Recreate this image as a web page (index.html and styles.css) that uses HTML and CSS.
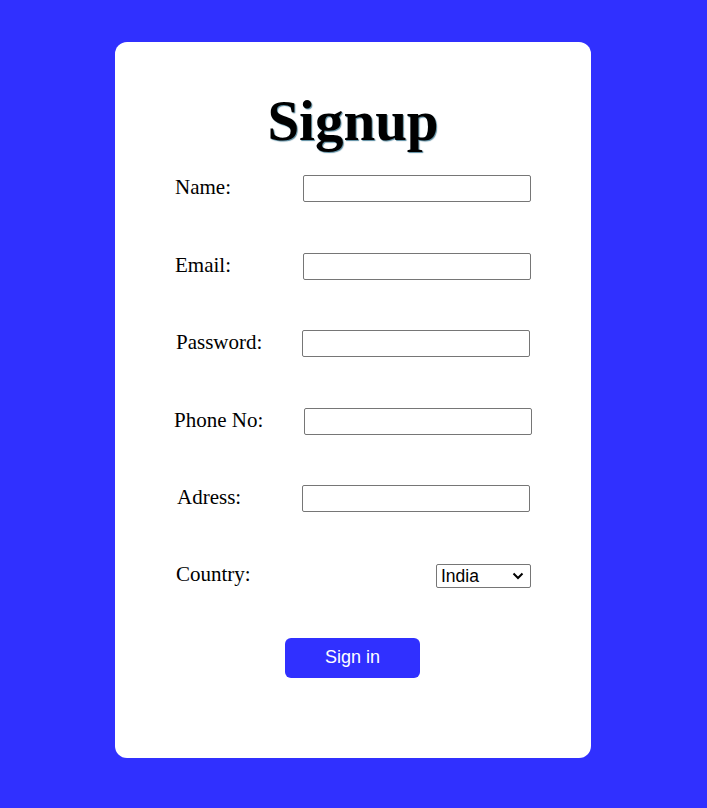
FILE: index.html
```html
<!DOCTYPE html>
<html lang="en">
<head>
<meta charset="utf-8">
<title>Signup</title>
<link rel="stylesheet" href="styles.css">
</head>
<body>
<div class="card">
  <h1 class="title">Signup</h1>
  <form class="form">
    <div class="row">
      <label class="label">Name:</label>
      <input class="field" type="text">
    </div>
    <div class="row">
      <label class="label">Email:</label>
      <input class="field" type="email">
    </div>
    <div class="row">
      <label class="label label-r1">Password:</label>
      <input class="field field-l1" type="password">
    </div>
    <div class="row">
      <label class="label label-l1">Phone No:</label>
      <input class="field field-r1" type="text">
    </div>
    <div class="row">
      <label class="label label-r2">Adress:</label>
      <input class="field field-l1" type="text">
    </div>
    <div class="row row-select">
      <label class="label label-r1">Country:</label>
      <select class="select">
        <option>India</option>
        <option>USA</option>
        <option>UK</option>
      </select>
    </div>
    <div class="actions">
      <button class="btn" type="button">Sign in</button>
    </div>
  </form>
</div>
</body>
</html>
```
FILE: styles.css
```css
html, body {
  margin: 0;
  padding: 0;
}
body {
  background: #3030ff;
  min-height: 808px;
  padding-right: 1px;
  font-family: "Liberation Serif", "Times New Roman", serif;
}
.card {
  width: 476px;
  height: 716px;
  margin: 42px auto 0;
  background: #ffffff;
  border-radius: 12px;
  box-sizing: border-box;
  padding: 0 60px;
}
.title {
  margin: 0;
  padding-top: 45px;
  text-align: center;
  font-family: "Liberation Serif", serif;
  font-weight: 700;
  font-size: 57px;
  line-height: 68px;
  color: #000;
  text-shadow: 1px 1px 1px rgba(20, 90, 120, 0.7);
}
.form {
  display: flex;
  flex-direction: column;
  margin-top: 20px;
}
.row {
  display: flex;
  align-items: center;
  justify-content: space-between;
  height: 27px;
  margin-bottom: 50.6px;
}
.label {
  font-size: 21px;
  color: #000;
  position: relative;
  top: -1px;
}
.label-r1 { margin-left: 1px; }
.label-r2 { margin-left: 2px; }
.label-l1 { margin-left: -1px; }
.field {
  width: 228px;
  height: 27px;
  box-sizing: border-box;
  border: 1px solid #767676;
  border-radius: 2px;
  padding: 2px 4px;
  font-size: 14px;
  background: #fff;
}
.field-l1 { margin-right: 1px; }
.field-r1 { margin-right: -1px; }
.row-select {
  height: 24px;
  margin-top: 1px;
  margin-bottom: 50px;
}
.select {
  -webkit-appearance: none;
  appearance: none;
  width: 95px;
  height: 24px;
  box-sizing: border-box;
  border: 1px solid #767676;
  border-radius: 2px;
  font-family: "Liberation Sans", Arial, sans-serif;
  font-size: 17.5px;
  line-height: 22px;
  color: #000;
  padding: 0 20px 0 4px;
  background: #fff url("data:image/svg+xml;utf8,<svg xmlns='http://www.w3.org/2000/svg' width='12' height='8' viewBox='0 0 12 8'><path d='M1.5 1.5 L6 6 L10.5 1.5' fill='none' stroke='black' stroke-width='2'/></svg>") no-repeat right 6px center / 12px 8px;
}
.actions {
  display: flex;
  justify-content: center;
}
.btn {
  width: 135px;
  height: 40px;
  margin-right: 1px;
  border: none;
  border-radius: 6px;
  background: #3030ff;
  color: #fff;
  font-family: "Liberation Sans", Arial, sans-serif;
  font-size: 18px;
  cursor: pointer;
}
```
